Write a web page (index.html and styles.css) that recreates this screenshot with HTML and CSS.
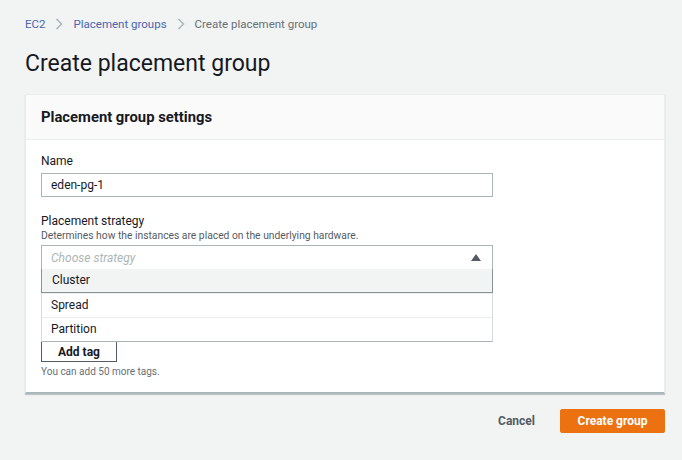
FILE: index.html
```html
<!DOCTYPE html>
<html>
<head>
<meta charset="utf-8">
<link rel="stylesheet" href="styles.css">
</head>
<body>
<div class="page">
  <nav class="crumbs">
    <a class="crumb-link">EC2</a>
    <svg class="chev" width="8" height="12" viewBox="0 0 8 12"><path d="M1.5 1 L6.5 6 L1.5 11" fill="none" stroke="#aab7b8" stroke-width="1.5"/></svg>
    <a class="crumb-link">Placement groups</a>
    <svg class="chev" width="8" height="12" viewBox="0 0 8 12"><path d="M1.5 1 L6.5 6 L1.5 11" fill="none" stroke="#aab7b8" stroke-width="1.5"/></svg>
    <span class="crumb-current">Create placement group</span>
  </nav>
  <h1 class="title">Create placement group</h1>
  <section class="panel">
    <header class="panel-head">Placement group settings</header>
    <div class="panel-body">
      <div class="field">
        <label class="label">Name</label>
        <div class="input">eden-pg-1</div>
      </div>
      <div class="field field-strategy">
        <label class="label">Placement strategy</label>
        <div class="desc">Determines how the instances are placed on the underlying hardware.</div>
        <div class="select-wrap">
          <div class="select">
            <span class="placeholder">Choose strategy</span>
            <svg class="caret" width="10" height="7" viewBox="0 0 10 7"><path d="M0 7 L5 0 L10 7 Z" fill="#545b64"/></svg>
          </div>
          <ul class="menu">
            <li class="opt opt-active">Cluster</li>
            <li class="opt">Spread</li>
            <li class="opt">Partition</li>
          </ul>
        </div>
      </div>
      <button class="btn-tag">Add tag</button>
      <div class="hint">You can add 50 more tags.</div>
    </div>
  </section>
  <div class="actions">
    <button class="btn-cancel">Cancel</button>
    <button class="btn-primary">Create group</button>
  </div>
</div>
</body>
</html>
```
FILE: styles.css
```css
* { box-sizing: border-box; }
html, body { margin: 0; padding: 0; }
body {
  background: #f2f3f3;
  font-family: Roboto, "Open Sans", sans-serif;
  color: #16191f;
  width: 682px;
  height: 460px;
  overflow: hidden;
}
.page { padding: 15px 17px 0 25px; }
.crumbs {
  display: flex;
  align-items: center;
  gap: 10px;
  font-size: 11.5px;
  height: 18px;
}
.crumb-link { color: #4a67b0; }
.crumb-current { color: #687078; }
.chev { display: block; }
.title {
  margin: 15px 0 0;
  font-size: 23px;
  font-weight: 400;
  line-height: 32px;
  height: 46px;
}
.panel {
  background: #fff;
  border: 1px solid #eaeded;
  border-bottom: 2px solid #aab7b8;
  box-shadow: 0 1px 1px rgba(0,28,36,0.2);
  height: 300px;
}
.panel-head {
  background: #fafafa;
  border-bottom: 1px solid #eaeded;
  height: 45px;
  padding: 0 15px;
  font-size: 14.8px;
  font-weight: 700;
  line-height: 44px;
}
.panel-body { padding: 13px 15px 0; }
.label { display: block; font-size: 12px; line-height: 16px; color: #16191f; }
.field { width: 452px; }
.field .label { margin-bottom: 4px; }
.input {
  height: 24px;
  border: 1px solid #aab7b8;
  font-size: 12px;
  line-height: 22px;
  padding: 0 9px;
}
.field-strategy { margin-top: 16px; }
.field-strategy .label { margin-bottom: 0; }
.desc { font-size: 10.3px; line-height: 13px; color: #545b64; margin-bottom: 3px; }
.select-wrap { position: relative; }
.select {
  height: 25px;
  border: 1px solid #aab7b8;
  display: flex;
  align-items: center;
  justify-content: space-between;
  padding: 0 11px 0 9px;
}
.placeholder { font-style: italic; color: #aab7b8; font-size: 12px; }
.caret { display: block; }
.menu {
  position: absolute;
  top: 24px;
  left: 0;
  right: 0;
  margin: 0;
  padding: 0;
  list-style: none;
  background: #fff;
  border: 1px solid #d5dbdb;
  border-bottom: 1px solid #aab7b8;
  z-index: 2;
}
.opt {
  height: 24px;
  font-size: 12px;
  line-height: 23px;
  padding: 0 9px;
  border-top: 1px solid #eaeded;
}
.opt:first-child { border-top: none; }
.opt-active {
  background: #f2f3f3;
  border: 1px solid #879596;
  margin: -1px -1px 0;
  padding-left: 10px;
}
.btn-tag {
  margin-top: 71px;
  width: 76px;
  height: 21px;
  border: 1px solid #545b64;
  background: #fff;
  font-family: inherit;
  font-weight: 700;
  font-size: 12px;
  color: #16191f;
  padding: 0;
  display: block;
}
.hint { margin-top: 3px; font-size: 10px; color: #687078; line-height: 14px; }
.actions {
  display: flex;
  justify-content: flex-end;
  align-items: center;
  gap: 25px;
  margin-top: 15px;
}
.btn-cancel {
  border: none;
  background: none;
  font-family: inherit;
  font-weight: 700;
  font-size: 12px;
  color: #545b64;
  padding: 0;
}
.btn-primary {
  width: 105px;
  height: 24px;
  background: #ec7211;
  color: #fff;
  border: 1px solid #ec7211;
  border-radius: 2px;
  font-family: inherit;
  font-weight: 700;
  font-size: 12px;
  padding: 0;
}
```
